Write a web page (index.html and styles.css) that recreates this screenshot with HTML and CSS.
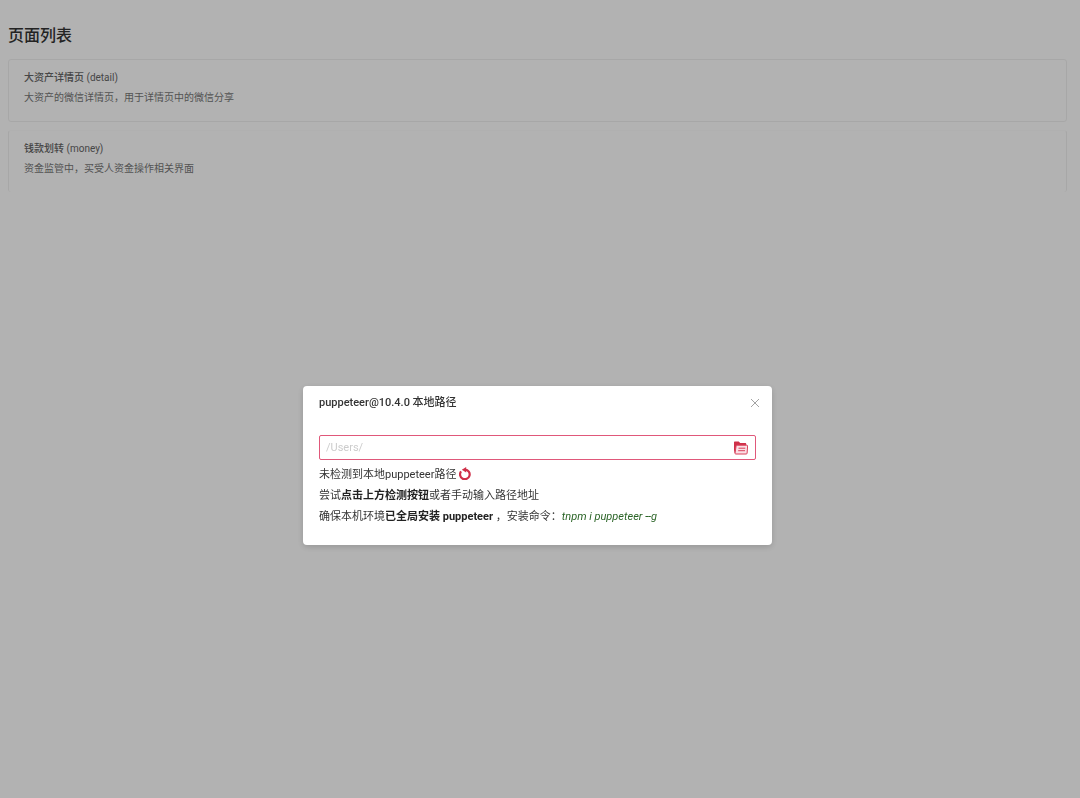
FILE: index.html
```html
<!DOCTYPE html>
<html lang="zh-CN">
<head>
<meta charset="utf-8">
<title>页面列表</title>
<link rel="stylesheet" href="styles.css">
</head>
<body>
<main class="page">
  <h1 class="page-title">页面列表</h1>
  <section class="card">
    <h2 class="card-title"><b class="card-name">大资产详情页</b> (detail)</h2>
    <p class="card-text">大资产的微信详情页，用于详情页中的微信分享</p>
  </section>
  <section class="card card-open">
    <h2 class="card-title"><b class="card-name">钱款划转</b> (money)</h2>
    <p class="card-text">资金监管中，买受人资金操作相关界面</p>
  </section>
</main>
<div class="overlay">
  <div class="dialog" role="dialog" aria-modal="true" aria-labelledby="dialog-title">
    <header class="dialog-header">
      <h2 class="dialog-title" id="dialog-title">puppeteer@10.4.0 本地路径</h2>
      <button class="icon-button" type="button" aria-label="关闭">
        <svg width="10" height="10" viewBox="0 0 10 10" fill="none" stroke="#999" stroke-width="0.9"><path d="M1 1l8 8M9 1L1 9"/></svg>
      </button>
    </header>
    <div class="field">
      <input class="field-input" type="text" placeholder="/Users/" aria-label="本地路径">
      <button class="icon-button" type="button" aria-label="选择文件夹">
        <svg width="14" height="14" viewBox="0 0 14 14">
          <path fill="#cf3049" d="M0 1.2Q0 .5.7.5h4l1.5 1.6h5.3q.7 0 .7.8V5H2v7H.6L0 9z"/>
          <path fill="#fbdfe5" stroke="#d8405a" stroke-linejoin="round" d="M3 4.2h9.8q.8 0 .8.8l-.5 7.2q-.1.8-.9.8H1.8q-.9 0-.8-.8L2.1 5q.1-.8.9-.8z"/>
          <path fill="none" stroke="#d8405a" d="M4.5 7.2h6.8M4.2 9.7H11"/>
        </svg>
      </button>
    </div>
    <div class="hints">
      <p class="hint">未检测到本地puppeteer路径
        <button class="icon-button" type="button" aria-label="重新检测">
          <svg width="12" height="13" viewBox="0 0 12 13"><path fill="none" stroke="#cf3049" stroke-width="2.2" d="M2.1 4.4A4.8 4.8 0 1 0 6.2 2.6"/><path fill="#cf3049" d="M7.2 0v5.4L2.8 2.7z"/></svg>
        </button>
      </p>
      <p class="hint">尝试<b>点击上方检测按钮</b>或者手动输入路径地址</p>
      <p class="hint">确保本机环境<b>已全局安装 puppeteer</b> ，安装命令：<em class="command">tnpm i puppeteer --g</em></p>
    </div>
  </div>
</div>
</body>
</html>
```

FILE: styles.css
```css
* {
  box-sizing: border-box;
}

body {
  margin: 0;
  background: #fff;
  color: #333;
  font-family: Roboto, "Noto Sans CJK SC", sans-serif;
}

h1, h2, p {
  margin: 0;
}

.page {
  padding: 24px 13px 0 8px;
}

.page-title {
  margin-bottom: 12px;
  font-size: 16px;
  line-height: 23px;
  font-weight: 500;
}

.card {
  margin-bottom: 8px;
  padding: 8px 15px 13px;
  border: 1px solid #f0f0f0;
  border-radius: 3px;
  font-size: 10px;
  line-height: 20px;
}

.card-open {
  border-top-color: #fcfcfc;
  border-bottom: 0;
}

.card-title {
  font-size: 10px;
  font-weight: 400;
  color: #666;
}

.card-name {
  font-weight: 500;
  color: #666;
}

.card-text {
  color: #777;
}

.overlay {
  position: fixed;
  inset: 0;
  display: flex;
  align-items: flex-start;
  justify-content: center;
  padding: 386px 5px 0 0;
  background: rgba(0, 0, 0, 0.3);
}

.dialog {
  width: 469px;
  padding: 7px 16px 18px;
  border-radius: 4px;
  background: #fff;
  box-shadow: 0 2px 6px rgba(0, 0, 0, 0.16);
  font-size: 11px;
  color: #333;
}

.dialog-header {
  display: flex;
  align-items: center;
  justify-content: space-between;
  height: 20px;
  margin-bottom: 22px;
}

.dialog-title {
  font-size: 11px;
  line-height: 20px;
  font-weight: 500;
}

.icon-button {
  display: inline-flex;
  padding: 0;
  border: 0;
  background: none;
  cursor: pointer;
}

.dialog-header .icon-button {
  margin-right: -4px;
}

.field {
  display: flex;
  align-items: center;
  height: 25px;
  margin-bottom: 4px;
  padding: 0 7px 0 6px;
  border: 1px solid #e0587a;
  border-radius: 2px;
}

.field-input {
  flex: 1;
  min-width: 0;
  padding: 0;
  border: 0;
  outline: 0;
  background: none;
  font: inherit;
}

.field-input::placeholder {
  color: #ccc;
}

.hint {
  line-height: 21px;
  height: 21px;
}

.hint b {
  font-weight: 700;
  color: #222;
}

.hint .icon-button {
  vertical-align: -2px;
}

.command {
  color: #2b6427;
}
```
